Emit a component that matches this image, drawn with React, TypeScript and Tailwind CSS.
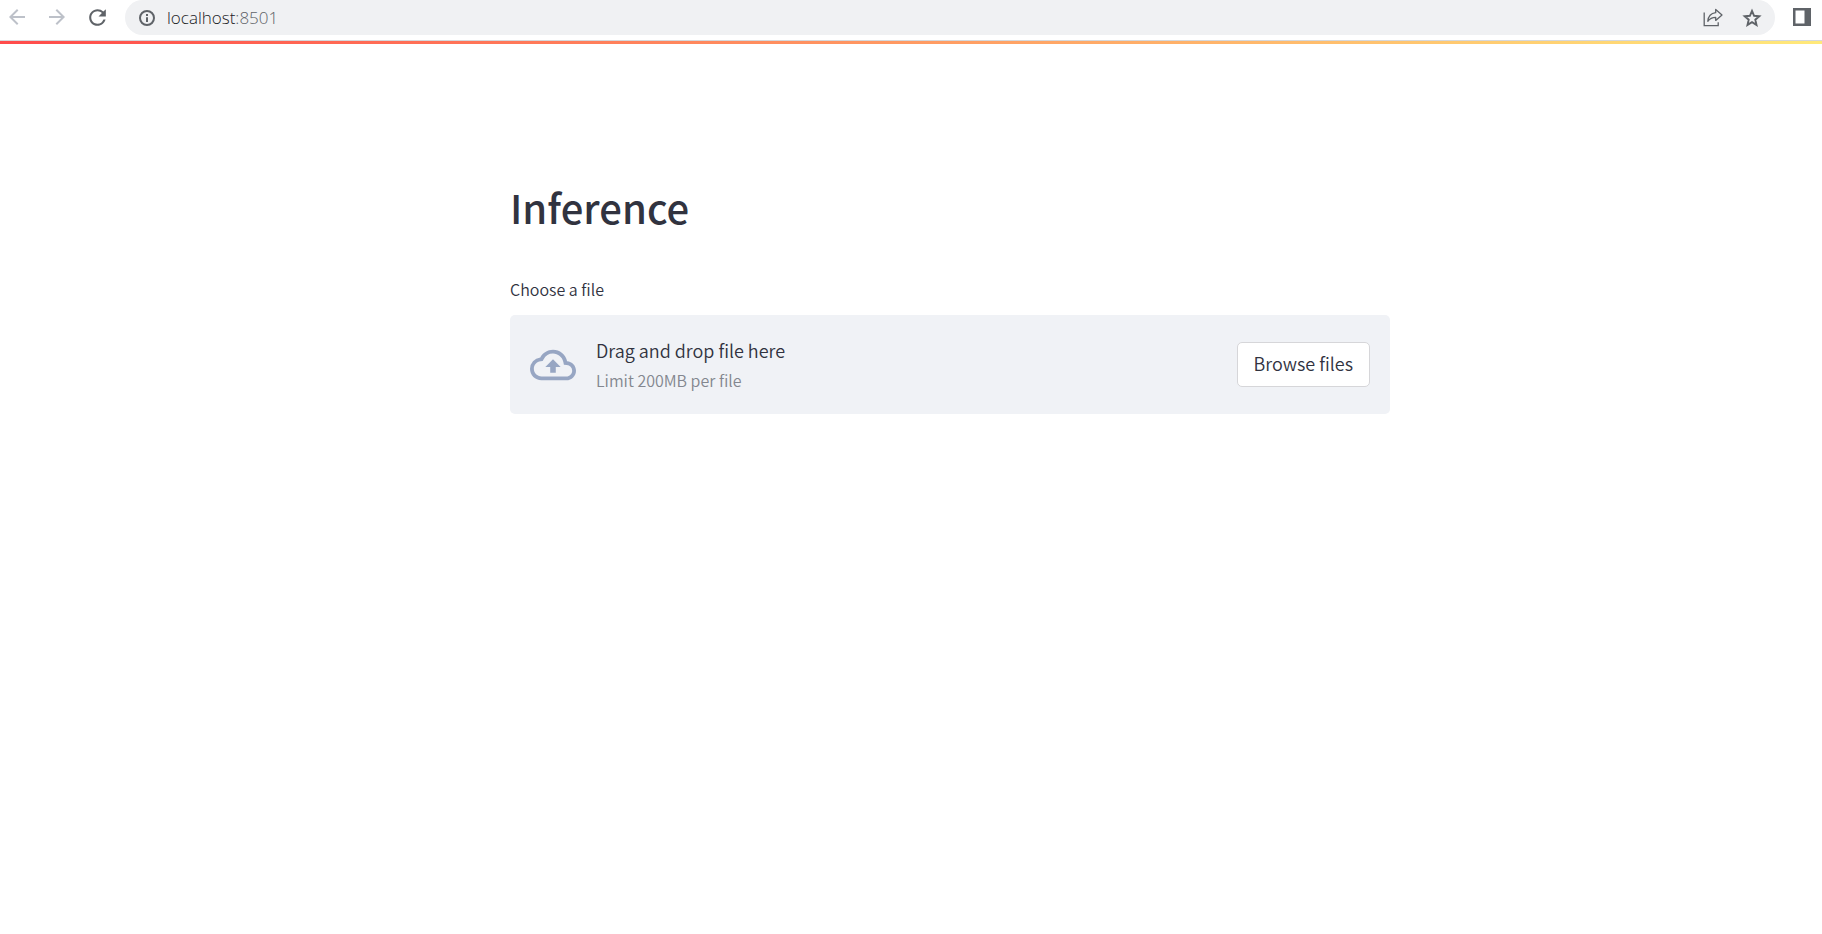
import { useRef } from "react";
import { MdArrowBack, MdArrowForward, MdOutlineCloudUpload, MdRefresh } from "react-icons/md";

function ShareIcon() {
  return (
    <svg className="size-5" viewBox="0 0 20 20" fill="none" stroke="currentColor" strokeWidth="1.3" aria-hidden="true">
      <path d="M1.2 4.5V17.6H15.2V14.2" />
      <path d="M12.7 1.4L19 6.9L12.7 12.4V9.3C9.2 9.3 6.8 10.4 4.8 13.3C5.2 8.9 7.6 5.3 12.7 4.7Z" strokeLinejoin="round" />
    </svg>
  );
}

function StarIcon() {
  return (
    <svg className="size-[22px]" viewBox="0 0 22 22" fill="none" stroke="currentColor" strokeWidth="1.9" aria-hidden="true">
      <path d="M11 3.9L13.1 8.8L18.3 9.3L14.3 12.7L15.5 17.9L11 15.1L6.5 17.9L7.7 12.7L3.7 9.3L8.9 8.8Z" />
    </svg>
  );
}

function InfoIcon() {
  return (
    <svg className="size-4" viewBox="0 0 16 16" fill="none" stroke="currentColor" strokeWidth="2" aria-hidden="true">
      <circle cx="8" cy="8" r="7" />
      <path d="M8 7.2V12M8 4V6" />
    </svg>
  );
}

function SidePanelIcon() {
  return (
    <svg className="size-[18px]" viewBox="0 0 18 18" aria-hidden="true">
      <path fill="currentColor" fillRule="evenodd" d="M0 0H18V18H0ZM2.5 2.5V15.5H11.5V2.5Z" />
    </svg>
  );
}

function BrowserBar() {
  return (
    <header className="flex h-[41px] items-start border-b border-[#d5d8dc] bg-white text-[#5f6368]">
      <nav className="flex h-[34px] w-[125px] items-center gap-4 pl-[5px]" aria-label="Browser">
        <button type="button" aria-label="Back" className="text-[#bdc1c9]">
          <MdArrowBack className="size-6" />
        </button>
        <button type="button" aria-label="Forward" className="text-[#bdc1c9]">
          <MdArrowForward className="size-6" />
        </button>
        <button type="button" aria-label="Reload">
          <MdRefresh className="size-[25px]" />
        </button>
      </nav>
      <div className="flex h-[35px] flex-1 items-center rounded-r-full rounded-l-full bg-[#f0f1f3] pr-3 pl-[14px]">
        <InfoIcon />
        <a href="#" className="ml-3 flex-1 font-['Open_Sans',sans-serif] text-[17px] leading-6 font-light text-[#202124]">
          localhost<span className="text-[#5f6368]">:8501</span>
        </a>
        <button type="button" aria-label="Share" className="mr-[18px]">
          <ShareIcon />
        </button>
        <button type="button" aria-label="Bookmark">
          <StarIcon />
        </button>
      </div>
      <button type="button" aria-label="Side panel" className="flex h-[34px] items-center pr-[11px] pl-[18px]">
        <SidePanelIcon />
      </button>
    </header>
  );
}

export default function App() {
  const picker = useRef<HTMLInputElement>(null);
  return (
    <div className="min-h-screen bg-white font-['Noto_Sans_CJK_SC',sans-serif] text-[#31333f]">
      <BrowserBar />
      <div className="h-[3px] bg-linear-to-r/srgb from-[#ff4b4b] to-[#ffe97a]" />
      <main className="pt-[133px] pl-[78px]">
        <div className="mx-auto max-w-[880px]">
          <h1 className="text-[40px] leading-[60px] font-medium">Inference</h1>
          <label htmlFor="file" className="mt-10 block text-[16px] leading-6 font-[350]">
            Choose a file
          </label>
          <input ref={picker} id="file" type="file" className="hidden" />
          <section className="mt-[14px] flex h-[99px] items-center rounded-[5px] bg-[#f0f2f6] px-5">
            <MdOutlineCloudUpload className="mr-5 size-[46px] text-[#97a6c3]" />
            <div className="flex-1">
              <p className="text-[18px] leading-[30px] font-[350]">Drag and drop file here</p>
              <p className="text-[16px] leading-[30px] font-[350] text-[#83878f]">Limit 200MB per file</p>
            </div>
            <button
              type="button"
              onClick={() => picker.current?.click()}
              className="h-[45px] rounded-[5px] border border-[#d6d6d9] bg-white px-4 pb-1 text-[18px] leading-6 font-[350]"
            >
              Browse files
            </button>
          </section>
        </div>
      </main>
    </div>
  );
}
